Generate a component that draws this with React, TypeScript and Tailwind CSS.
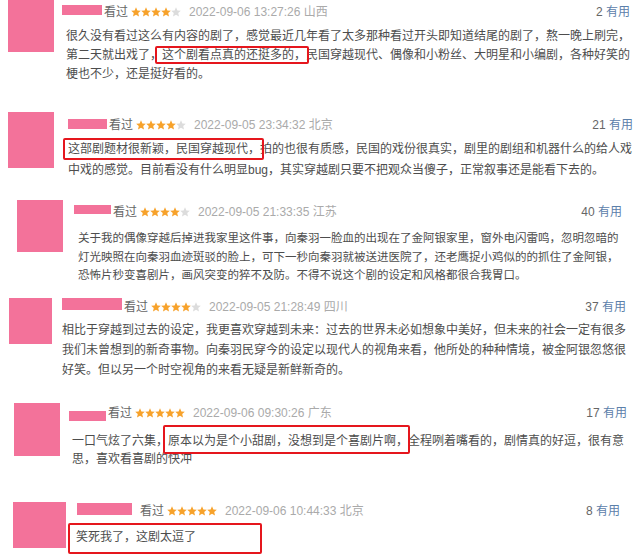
import React from 'react';

const PINK = 'bg-[#f3729a]';

function Star({ on }: { on: boolean }) {
  return (
    <svg viewBox="1.2 1.2 21.6 21.6" className="w-[10px] h-[10px]" fill={on ? '#f7a22b' : '#dcdcdc'}>
      <path d="M12 1.8l3 7 7.4.6-5.6 4.9 1.7 7.3L12 17.7l-6.5 3.9 1.7-7.3L1.6 9.4 9 8.8z" />
    </svg>
  );
}

interface HeaderProps {
  nameClass: string;
  rating: number;
  date: string;
  place: string;
  count: number;
  className?: string;
}

function Header({ nameClass, rating, date, place, count, className = '' }: HeaderProps) {
  return (
    <div className={`flex items-center text-[12px] ${className}`}>
      <div className={`${PINK} ${nameClass}`} />
      <span className="ml-[2px] text-[#666]">看过</span>
      <div className="ml-[3px] flex">
        {[0, 1, 2, 3, 4].map((i) => (
          <Star key={i} on={i < rating} />
        ))}
      </div>
      <span className="ml-[8px] text-[#aaa]">
        {date} {place}
      </span>
      <span className="ml-auto text-[#666]">
        {count} <span className="text-[#5b80aa]">有用</span>
      </span>
    </div>
  );
}

// red box drawn over a piece of text
function Mark({ children, box }: { children: React.ReactNode; box: string }) {
  return (
    <span className="relative">
      {children}
      <span className={`absolute border-2 border-[#e5161d] rounded-[2px] ${box}`} />
    </span>
  );
}

export default function App() {
  return (
    <div className="w-[640px] h-[558px] overflow-hidden bg-white font-['Liberation_Sans','Noto_Sans_CJK_SC',sans-serif]">
      {/* 1 */}
      <div className="flex h-[105px]">
        <div className={`ml-[8px] w-[46px] h-[52px] shrink-0 ${PINK}`} />
        <div className="ml-[8px] flex-1 pr-[16px]">
          <Header
            className="mt-[2px] h-[20px]"
            nameClass="w-[40px] h-[10px] -mt-[4px]"
            rating={4}
            date="2022-09-06 13:27:26"
            place="山西"
            count={2}
          />
          <div className="mt-[5px] pl-[4px] text-[12px] leading-[19px] text-[#4d4d4d] whitespace-nowrap">
            <p>很久没有看过这么有内容的剧了，感觉最近几年看了太多那种看过开头即知道结尾的剧了，熬一晚上刷完，</p>
            <p>
              第二天就出戏了，
              <Mark box="-left-[7px] -right-[3px] -top-[2px] -bottom-[2px]">这个剧看点真的还挺多的，</Mark>
              民国穿越现代、偶像和小粉丝、大明星和小编剧，各种好笑的
            </p>
            <p>梗也不少，还是挺好看的。</p>
          </div>
        </div>
      </div>

      {/* 2 */}
      <div className="flex h-[90px]">
        <div className={`ml-[8px] mt-[7px] w-[46px] h-[56px] shrink-0 ${PINK}`} />
        <div className="ml-[14px] flex-1 pr-[7px]">
          <Header
            className="mt-[10px] h-[20px]"
            nameClass="w-[39px] h-[10px] -mt-[3px]"
            rating={4}
            date="2022-09-05 23:34:32"
            place="北京"
            count={21}
          />
          <div className="mt-[4px] text-[12px] leading-[21px] text-[#4d4d4d] whitespace-nowrap">
            <p>
              <Mark box="-left-[5px] -right-[4px] -top-[4px] -bottom-[4px]">这部剧题材很新颖，民国穿越现代，</Mark>
              拍的也很有质感，民国的戏份很真实，剧里的剧组和机器什么的给人戏
            </p>
            <p>中戏的感觉。目前看没有什么明显bug，其实穿越剧只要不把观众当傻子，正常叙事还是能看下去的。</p>
          </div>
        </div>
      </div>

      {/* 3 */}
      <div className="flex h-[90px]">
        <div className={`ml-[17px] mt-[5px] w-[46px] h-[52px] shrink-0 ${PINK}`} />
        <div className="ml-[11px] flex-1 pr-[18px]">
          <Header
            className="mt-[7px] h-[20px]"
            nameClass="w-[37px] h-[9px] -mt-[5px]"
            rating={4}
            date="2022-09-05 21:33:35"
            place="江苏"
            count={40}
          />
          <div className="mt-[7px] pl-[4px] text-[11.5px] leading-[18.5px] text-[#4d4d4d] whitespace-nowrap">
            <p>关于我的偶像穿越后掉进我家里这件事，向秦羽一脸血的出现在了金阿银家里，窗外电闪雷鸣，忽明忽暗的</p>
            <p>灯光映照在向秦羽血迹斑驳的脸上，可下一秒向秦羽就被送进医院了，还老鹰捉小鸡似的的抓住了金阿银，</p>
            <p>恐怖片秒变喜剧片，画风突变的猝不及防。不得不说这个剧的设定和风格都很合我胃口。</p>
          </div>
        </div>
      </div>

      {/* 4 */}
      <div className="flex h-[100px]">
        <div className={`ml-[9px] mt-[13px] w-[43px] h-[46px] shrink-0 ${PINK}`} />
        <div className="ml-[10px] flex-1 pr-[15px]">
          <Header
            className="mt-[12px] h-[20px]"
            nameClass="w-[60px] h-[12px] -mt-[6px]"
            rating={4}
            date="2022-09-05 21:28:49"
            place="四川"
            count={37}
          />
          <div className="mt-[3px] text-[12px] leading-[20px] text-[#4d4d4d] whitespace-nowrap">
            <p>相比于穿越到过去的设定，我更喜欢穿越到未来：过去的世界未必如想象中美好，但未来的社会一定有很多</p>
            <p>我们未曾想到的新奇事物。向秦羽民穿今的设定以现代人的视角来看，他所处的种种情境，被金阿银忽悠很</p>
            <p>好笑。但以另一个时空视角的来看无疑是新鲜新奇的。</p>
          </div>
        </div>
      </div>

      {/* 5 */}
      <div className="flex h-[85px]">
        <div className={`ml-[14px] mt-[18px] w-[46px] h-[53px] shrink-0 ${PINK}`} />
        <div className="ml-[9px] flex-1 pr-[13px]">
          <Header
            className="mt-[18px] h-[20px]"
            nameClass="w-[37px] h-[10px] mt-[6px]"
            rating={5}
            date="2022-09-06 09:30:26"
            place="广东"
            count={17}
          />
          <div className="mt-[9px] pl-[3px] text-[12px] leading-[18px] text-[#4d4d4d] whitespace-nowrap">
            <p>
              一口气炫了六集，
              <Mark box="-left-[5px] -right-[2px] -top-[9px] -bottom-[6px]">原本以为是个小甜剧，没想到是个喜剧片啊，</Mark>
              全程咧着嘴看的，剧情真的好逗，很有意
            </p>
            <p>思，喜欢看喜剧的快冲</p>
          </div>
        </div>
      </div>

      {/* 6 */}
      <div className="flex h-[88px]">
        <div className={`ml-[13px] mt-[32px] w-[53px] h-[46px] shrink-0 ${PINK}`} />
        <div className="ml-[11px] flex-1 pr-[20px]">
          <Header
            className="mt-[31px] h-[20px]"
            nameClass="w-[55px] h-[12px] -mt-[4px] mr-[6px]"
            rating={5}
            date="2022-09-06 10:44:33"
            place="北京"
            count={8}
          />
          <div className="mt-[6px] -ml-[1px] text-[12px] leading-[20px] text-[#4d4d4d] whitespace-nowrap">
            <p>
              <Mark box="-left-[8px] -right-[66px] -top-[7px] -bottom-[10px]">笑死我了，这剧太逗了</Mark>
            </p>
          </div>
        </div>
      </div>
    </div>
  );
}
